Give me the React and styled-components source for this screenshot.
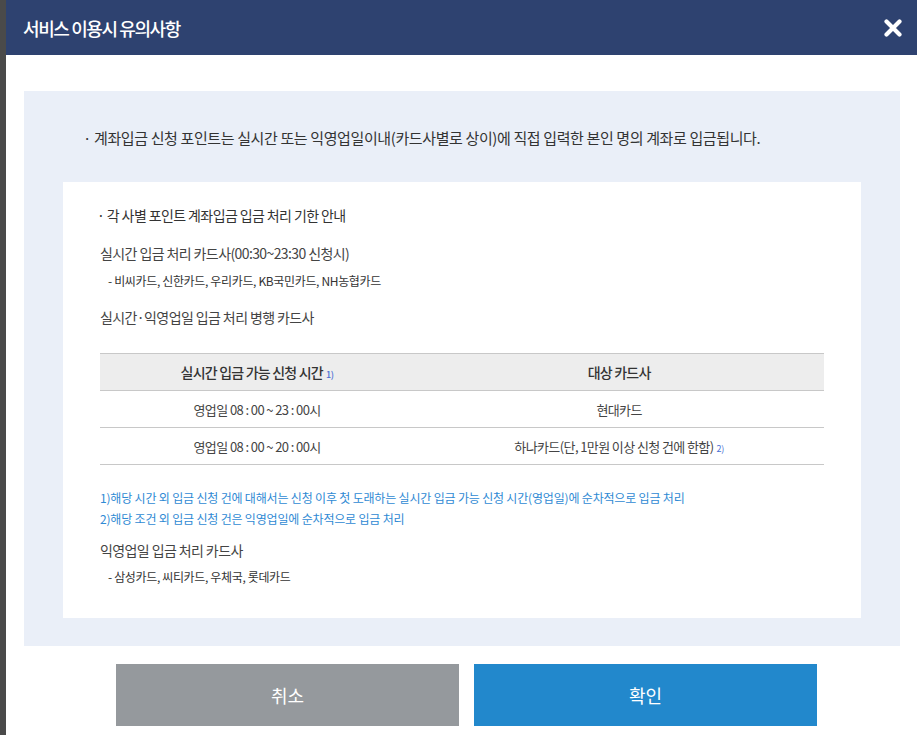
import React from "react";
import styled, { createGlobalStyle } from "styled-components";

const Global = createGlobalStyle`
  html, body { margin: 0; padding: 0; background: #ffffff; }
  body { font-family: "Noto Sans CJK KR", "Noto Sans", sans-serif; }
  * { box-sizing: border-box; }
`;

const Page = styled.div`
  display: flex;
  width: 917px;
  height: 735px;
  overflow: hidden;
`;

const Strip = styled.div`
  width: 6px;
  flex: 0 0 6px;
  background: #4a4a4a;
`;

const Modal = styled.div`
  flex: 1;
  display: flex;
  flex-direction: column;
  background: #ffffff;
`;

const Header = styled.div`
  height: 55px;
  background: #2e4270;
  display: flex;
  align-items: center;
  justify-content: space-between;
  padding: 0 14px 0 17px;
`;

const Title = styled.h1`
  margin: 0;
  color: #ffffff;
  font-size: 18px;
  font-weight: 500;
  letter-spacing: -1.4px;
`;

const CloseBtn = styled.button`
  border: 0;
  background: none;
  padding: 0;
  width: 20px;
  height: 20px;
  display: flex;
  align-items: center;
  justify-content: center;
  cursor: pointer;
`;

const Body = styled.div`
  padding: 36px 17px 0 18px;
`;

const Panel = styled.div`
  background: #eaeff8;
  padding: 36px 39px 28px;
`;

const Lead = styled.p`
  margin: 0 0 33px 20px;
  font-size: 15px;
  line-height: 22px;
  color: #333333;
  letter-spacing: -0.38px;
`;

const Box = styled.div`
  background: #ffffff;
  padding: 23px 37px 32px;
`;

const Heading = styled.p`
  margin: 0 0 0 -3px;
  font-size: 14px;
  line-height: 20px;
  color: #333333;
  letter-spacing: -0.6px;
`;

const SubTitle = styled.p`
  margin: ${(p) => p.$mt}px 0 0;
  font-size: 14px;
  line-height: 20px;
  color: #444444;
  letter-spacing: -0.6px;
`;

const Item = styled.p`
  margin: ${(p) => p.$mt}px 0 0 8px;
  font-size: 12px;
  line-height: 18px;
  color: #333333;
  letter-spacing: -0.35px;
`;

const Table = styled.table`
  margin-top: 26px;
  width: 100%;
  border-collapse: collapse;
  border-top: 1px solid #c8c8c8;
`;

const Th = styled.th`
  height: 37px;
  background: #ededed;
  border-bottom: 1px solid #c8c8c8;
  font-size: 14px;
  font-weight: 500;
  color: #333333;
  letter-spacing: -0.8px;
  text-align: center;
  width: ${(p) => p.$w};
`;

const Td = styled.td`
  height: 37px;
  border-bottom: 1px solid #c8c8c8;
  font-size: 13px;
  color: #444444;
  letter-spacing: -0.6px;
  text-align: center;
`;

const Sup = styled.span`
  font-size: 9px;
  color: #4a6fd4;
  margin-left: 3px;
  letter-spacing: -0.3px;
`;

const Notes = styled.div`
  margin-top: 22px;
`;

const Note = styled.p`
  margin: 0;
  font-size: 12px;
  line-height: 21px;
  color: #2f8ad4;
  letter-spacing: -0.18px;
`;

const Buttons = styled.div`
  display: flex;
  justify-content: center;
  gap: 15px;
  padding: 18px 0 0 10px;
`;

const Button = styled.button`
  width: 343px;
  height: 62px;
  border: 0;
  background: ${(p) => (p.$primary ? "#2288cc" : "#95999d")};
  color: #ffffff;
  font-family: "Noto Sans CJK KR", sans-serif;
  font-size: 18px;
  cursor: pointer;
`;

export default function App() {
  return (
    <>
      <Global />
      <Page>
        <Strip />
        <Modal>
          <Header>
            <Title>서비스 이용시 유의사항</Title>
            <CloseBtn aria-label="닫기">
              <svg width="18" height="18" viewBox="0 0 18 18">
                <path d="M2.5 2.5 L15.5 15.5 M15.5 2.5 L2.5 15.5" stroke="#ffffff" strokeWidth="4.2" strokeLinecap="round" />
              </svg>
            </CloseBtn>
          </Header>
          <Body>
            <Panel>
              <Lead>· 계좌입금 신청 포인트는 실시간 또는 익영업일이내(카드사별로 상이)에 직접 입력한 본인 명의 계좌로 입금됩니다.</Lead>
              <Box>
                <Heading>· 각 사별 포인트 계좌입금 입금 처리 기한 안내</Heading>
                <SubTitle $mt={18}>실시간 입금 처리 카드사(00:30~23:30 신청시)</SubTitle>
                <Item $mt={9}>- 비씨카드, 신한카드, 우리카드, KB국민카드, NH농협카드</Item>
                <SubTitle $mt={17}>실시간·익영업일 입금 처리 병행 카드사</SubTitle>
                <Table>
                  <thead>
                    <tr>
                      <Th $w="43.4%">실시간 입금 가능 신청 시간<Sup>1)</Sup></Th>
                      <Th>대상 카드사</Th>
                    </tr>
                  </thead>
                  <tbody>
                    <tr>
                      <Td>영업일 08 : 00 ~ 23 : 00시</Td>
                      <Td>현대카드</Td>
                    </tr>
                    <tr>
                      <Td>영업일 08 : 00 ~ 20 : 00시</Td>
                      <Td>하나카드(단, 1만원 이상 신청 건에 한함)<Sup>2)</Sup></Td>
                    </tr>
                  </tbody>
                </Table>
                <Notes>
                  <Note>1)해당 시간 외 입금 신청 건에 대해서는 신청 이후 첫 도래하는 실시간 입금 가능 신청 시간(영업일)에 순차적으로 입금 처리</Note>
                  <Note>2)해당 조건 외 입금 신청 건은 익영업일에 순차적으로 입금 처리</Note>
                </Notes>
                <SubTitle $mt={11}>익영업일 입금 처리 카드사</SubTitle>
                <Item $mt={8}>- 삼성카드, 씨티카드, 우체국, 롯데카드</Item>
              </Box>
            </Panel>
          </Body>
          <Buttons>
            <Button>취소</Button>
            <Button $primary>확인</Button>
          </Buttons>
        </Modal>
      </Page>
    </>
  );
}
